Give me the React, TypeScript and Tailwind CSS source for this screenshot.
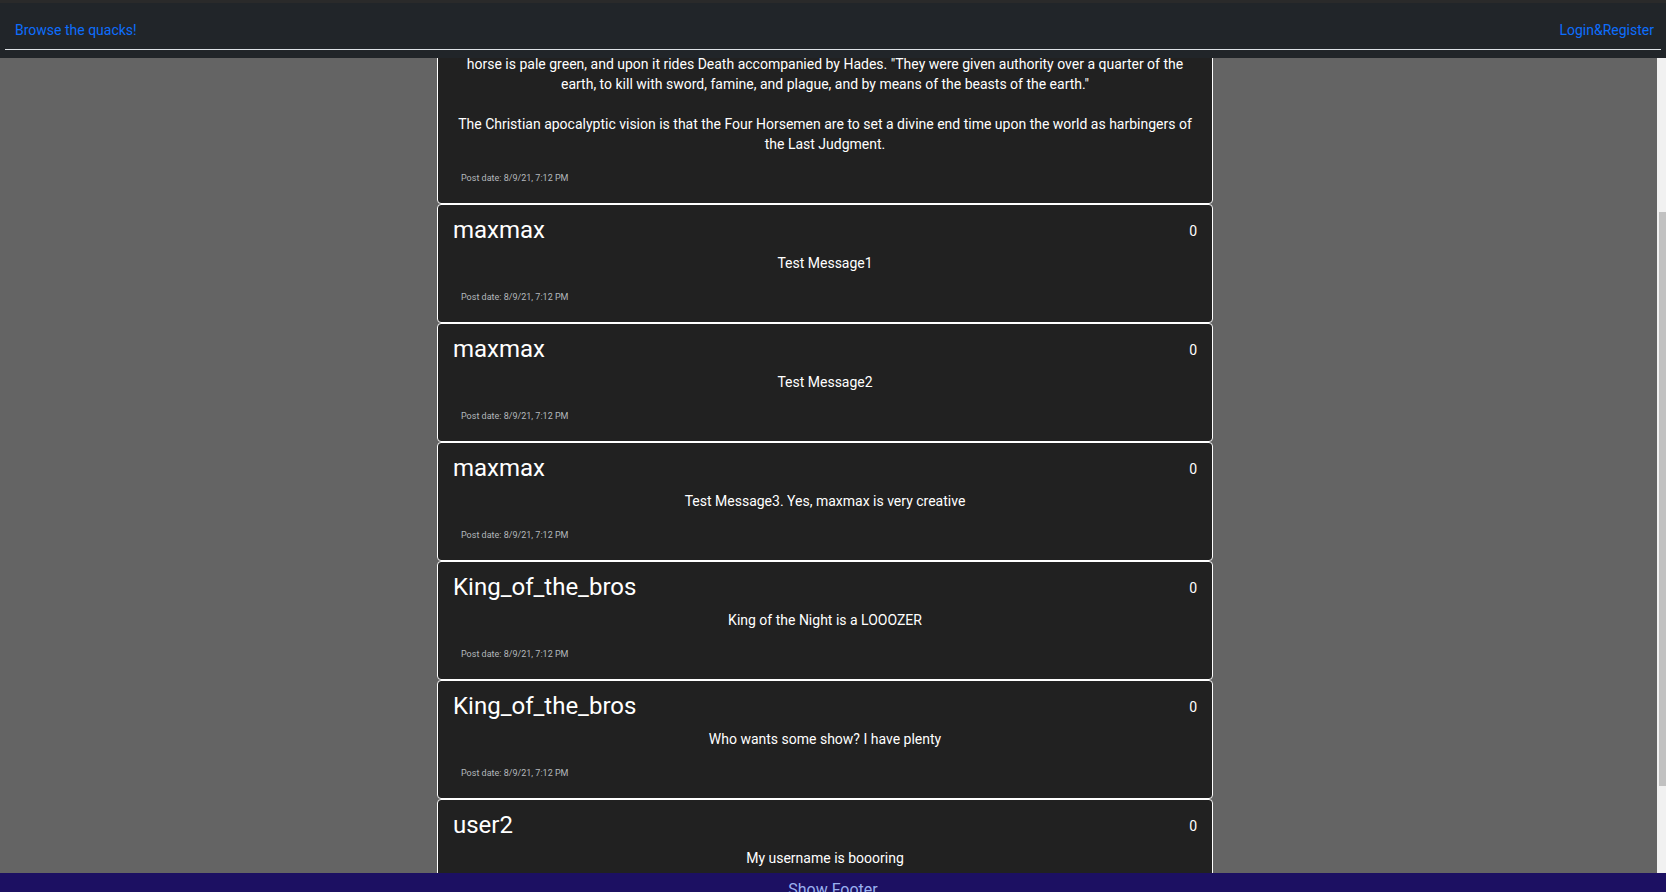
import React, { useLayoutEffect, useRef } from 'react';

interface Quack {
  author: string;
  likes: number;
  text: string;
  date: string;
}

const horsemen =
  "The Four Horsemen of the Apocalypse are figures in the Christian Bible, appearing in the Book of Revelation, a piece of apocalyptic literature written by John of Patmos. Revelation 6 tells of a book or scroll in God's right hand that is sealed with seven seals. The Lamb of God opens the first four of the seven seals, which summons four beings that ride out on white, red, black, and pale horses.\n\n" +
  "The first rider is on a white horse carrying a bow, the second carries a great sword, the third carries a pair of scales, and the fourth and final\n" +
  'horse is pale green, and upon it rides Death accompanied by Hades. "They were given authority over a quarter of the earth, to kill with sword, famine, and plague, and by means of the beasts of the earth."\n\n' +
  'The Christian apocalyptic vision is that the Four Horsemen are to set a divine end time upon the world as harbingers of the Last Judgment.';

const quacks: Quack[] = [
  { author: 'maxmax', likes: 0, text: horsemen, date: '8/9/21, 7:12 PM' },
  { author: 'maxmax', likes: 0, text: 'Test Message1', date: '8/9/21, 7:12 PM' },
  { author: 'maxmax', likes: 0, text: 'Test Message2', date: '8/9/21, 7:12 PM' },
  { author: 'maxmax', likes: 0, text: 'Test Message3. Yes, maxmax is very creative', date: '8/9/21, 7:12 PM' },
  { author: 'King_of_the_bros', likes: 0, text: 'King of the Night is a LOOOZER', date: '8/9/21, 7:12 PM' },
  { author: 'King_of_the_bros', likes: 0, text: 'Who wants some show? I have plenty', date: '8/9/21, 7:12 PM' },
  { author: 'user2', likes: 0, text: 'My username is boooring', date: '8/9/21, 7:12 PM' },
];

const QuackCard: React.FC<{ quack: Quack }> = ({ quack }) => (
  <div className="bg-[#212121] border border-white rounded-[4px] px-[15px] pt-[11px] pb-[19px] text-white">
    <div className="flex justify-between items-center h-[29px]">
      <span className="text-[24px] leading-[29px]">{quack.author}</span>
      <span className="text-[14px] leading-[20px]">{quack.likes}</span>
    </div>
    <p className="mt-[8px] text-center text-[14px] leading-[20px] whitespace-pre-line">{quack.text}</p>
    <div className="mt-[18px] pl-[8px] text-[9px] leading-[12px] text-[#b4b8bc]">Post date: {quack.date}</div>
  </div>
);

export default function App() {
  const listRef = useRef<HTMLDivElement>(null);

  useLayoutEffect(() => {
    if (listRef.current) listRef.current.scrollTop = 220;
  }, []);

  return (
    <div className="h-screen overflow-hidden flex flex-col bg-[#646464] font-['Roboto',sans-serif]">
      <div className="h-[3px] shrink-0 bg-[#2a2a2a]" />

      {/* Navbar */}
      <nav className="h-[55px] shrink-0 bg-[#212529] px-[5px]">
        <div className="h-[47px] border-b border-[#dee2e6] flex justify-between items-start pt-[17px] pl-[10px] pr-[7px] text-[14px] leading-[20px] text-[#0d6efd]">
          <a href="#">Browse the quacks!</a>
          <a href="#">Login&amp;Register</a>
        </div>
      </nav>

      {/* Quack list + scrollbar */}
      <div className="h-[815px] shrink-0 flex">
        <div ref={listRef} className="flex-1 overflow-hidden">
          <div className="pt-[27px] pb-[77px] pr-[7px]">
            <div className="w-[776px] mx-auto">
              {quacks.map((q, i) => (
                <QuackCard key={i} quack={q} />
              ))}
            </div>
          </div>
        </div>
        <div className="w-[9px] shrink-0 bg-[#f1f1f1] pl-[2px] pt-[154px]">
          <div className="h-[574px] bg-[#c1c1c1]" />
        </div>
      </div>

      <footer className="h-[40px] shrink-0 bg-[#1c1062] pt-[5px] text-center text-[16px] leading-[24px] text-[#9ab0f0]">
        Show Footer
      </footer>
    </div>
  );
}
